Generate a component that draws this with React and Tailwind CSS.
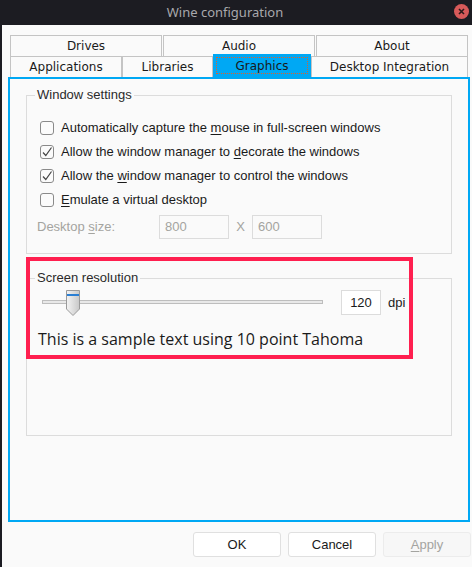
import React from "react";

const U = ({ children }) => <span className="underline underline-offset-2">{children}</span>;

const Check = ({ checked }) => (
  <span className="flex h-[14px] w-[14px] shrink-0 items-center justify-center rounded-[3px] border border-[#8a8a8a] bg-[#fbfbfb]">
    {checked && (
      <svg width="12" height="12" viewBox="0 0 12 12">
        <path d="M2 6.5 L4.8 9.5 L10.5 1.5" fill="none" stroke="#444" strokeWidth="1.2" />
      </svg>
    )}
  </span>
);

const CheckRow = ({ checked, children }) => (
  <div className="flex h-6 items-center gap-[7px] pl-[13px]">
    <Check checked={checked} />
    <span className="text-[13px] text-[#1a1a1a]">{children}</span>
  </div>
);

const Group = ({ title, className, children }) => (
  <fieldset className={`border border-[#dcdcdc] ${className}`}>
    <legend className="ml-[8px] px-[2px] text-[13px] leading-4 text-[#2a2a2a]">{title}</legend>
    {children}
  </fieldset>
);

export default function App() {
  const backTabs = ["Drives", "Audio", "About"];
  const frontTabs = [
    { name: "Applications", w: "w-[112px]" },
    { name: "Libraries", w: "w-[91px]" },
    { name: "Graphics", w: "w-[98px]", active: true },
    { name: "Desktop Integration", w: "w-[157px]" },
  ];

  return (
    <div className="flex h-[567px] w-[472px] flex-col bg-[#fafafa] font-['Liberation_Sans',sans-serif]">
      {/* title bar */}
      <div className="relative flex h-[25px] shrink-0 items-center justify-center bg-[#1c1c22] pr-[22px]">
        <span className="font-['Noto_Sans',sans-serif] text-[13px] text-[#a8a8ac]">Wine configuration</span>
        <span className="absolute right-[3px] top-[4px] flex h-[15px] w-[15px] items-center justify-center rounded-full bg-[#d75a5a]">
          <svg width="7" height="7" viewBox="0 0 7 7">
            <path d="M1 1 L6 6 M6 1 L1 6" stroke="#2a1a1a" strokeWidth="1.6" />
          </svg>
        </span>
      </div>

      <div className="flex flex-1 flex-col border-l-2 border-[#1c1c22] pl-[6px] pr-[2px] pt-[10px]">
        {/* tabs */}
        <div className="ml-[2px] flex w-[458px] font-['DejaVu_Sans',sans-serif] text-[12px] text-[#1a1a1a]">
          {backTabs.map((t, i) => (
            <div
              key={t}
              className={`flex h-[21px] flex-1 items-center justify-center border border-b-0 border-[#c4c4c4] ${i > 0 ? "ml-[1px]" : ""}`}
            >
              {t}
            </div>
          ))}
        </div>
        <div className="ml-[2px] flex h-[21px] w-[458px] items-end font-['DejaVu_Sans',sans-serif] text-[12px] text-[#1a1a1a]">
          {frontTabs.map((t) =>
            t.active ? (
              <div key={t.name} className={`${t.w} flex h-[23px] items-center justify-center bg-[#00a8f4] p-[3px]`}>
                <div className="flex h-full w-full items-center justify-center border border-dotted border-[#e0602a]">
                  {t.name}
                </div>
              </div>
            ) : (
              <div
                key={t.name}
                className={`${t.w} flex h-[21px] items-center justify-center border border-b-0 border-[#c4c4c4]`}
              >
                {t.name}
              </div>
            )
          )}
        </div>

        {/* panel */}
        <div className="relative flex h-[445px] flex-col border-2 border-[#00a8f4] px-4 pt-[8px]">
          <Group title="Window settings" className="h-[167px] pt-[13px]">
            <CheckRow>
              Automatically capture the <U>m</U>ouse in full-screen windows
            </CheckRow>
            <CheckRow checked>
              Allow the window manager to <U>d</U>ecorate the windows
            </CheckRow>
            <CheckRow checked>
              Allow the <U>w</U>indow manager to control the windows
            </CheckRow>
            <CheckRow>
              <U>E</U>mulate a virtual desktop
            </CheckRow>
            <div className="mt-[3px] flex h-6 items-center pl-[10px] text-[13px] text-[#a4a4a0]">
              <span className="w-[122px]">
                Desktop <U>s</U>ize:
              </span>
              <span className="flex h-[24px] w-[70px] items-center border border-[#dcdcdc] pl-[5px]">800</span>
              <span className="w-[23px] text-center">X</span>
              <span className="flex h-[24px] w-[70px] items-center border border-[#dcdcdc] pl-[5px]">600</span>
            </div>
          </Group>

          <Group title="Screen resolution" className="mt-[16px] h-[166px] pt-[4px]">
            <div className="flex h-[25px] items-center pl-[15px]">
              <div className="relative h-[25px] w-[281px]">
                <div className="absolute left-0 right-0 top-[10px] h-[4px] border border-[#bdbdbd] bg-[#e8e8e8]" />
                <svg className="absolute left-[24px] top-0" width="14" height="26" viewBox="0 0 14 26">
                  <defs>
                    <linearGradient id="th" x1="0" x2="1" y1="0" y2="0">
                      <stop offset="0" stopColor="#f4f4f4" />
                      <stop offset="1" stopColor="#c8c8c8" />
                    </linearGradient>
                  </defs>
                  <path d="M0.5 0.5 H13.5 V19 L7 25.5 L0.5 19 Z" fill="url(#th)" stroke="#9a9a9a" />
                  <rect x="1" y="4" width="12" height="2" fill="#2a7fd4" />
                </svg>
              </div>
              <span className="ml-[18px] flex h-[25px] w-[40px] items-center justify-center border border-[#dcdcdc] bg-white text-[13px] text-[#1a1a1a]">
                120
              </span>
              <span className="ml-[7px] text-[13px] text-[#1a1a1a]">dpi</span>
            </div>
            <div className="mt-[12px] pl-[11px] font-['Open_Sans',sans-serif] text-[16px] text-[#1a1a1a]">
              This is a sample text using 10 point Tahoma
            </div>
          </Group>

          {/* highlight annotation */}
          <div className="pointer-events-none absolute left-[16px] top-[178px] h-[102px] w-[387px] border-4 border-[#ff1f4f]" />
        </div>

        {/* buttons */}
        <div className="-mr-[1px] mt-[10px] flex justify-end gap-[7px] text-[13px]">
          <button className="h-[25px] w-[88px] rounded-[3px] border border-[#e0e0e0] bg-white text-[#1a1a1a]">OK</button>
          <button className="h-[25px] w-[88px] rounded-[3px] border border-[#e0e0e0] bg-white text-[#1a1a1a]">Cancel</button>
          <button className="h-[25px] w-[88px] rounded-[3px] border border-[#ececec] bg-[#f7f7f7] text-[#a4a4a0]">
            <U>A</U>pply
          </button>
        </div>
      </div>
    </div>
  );
}
